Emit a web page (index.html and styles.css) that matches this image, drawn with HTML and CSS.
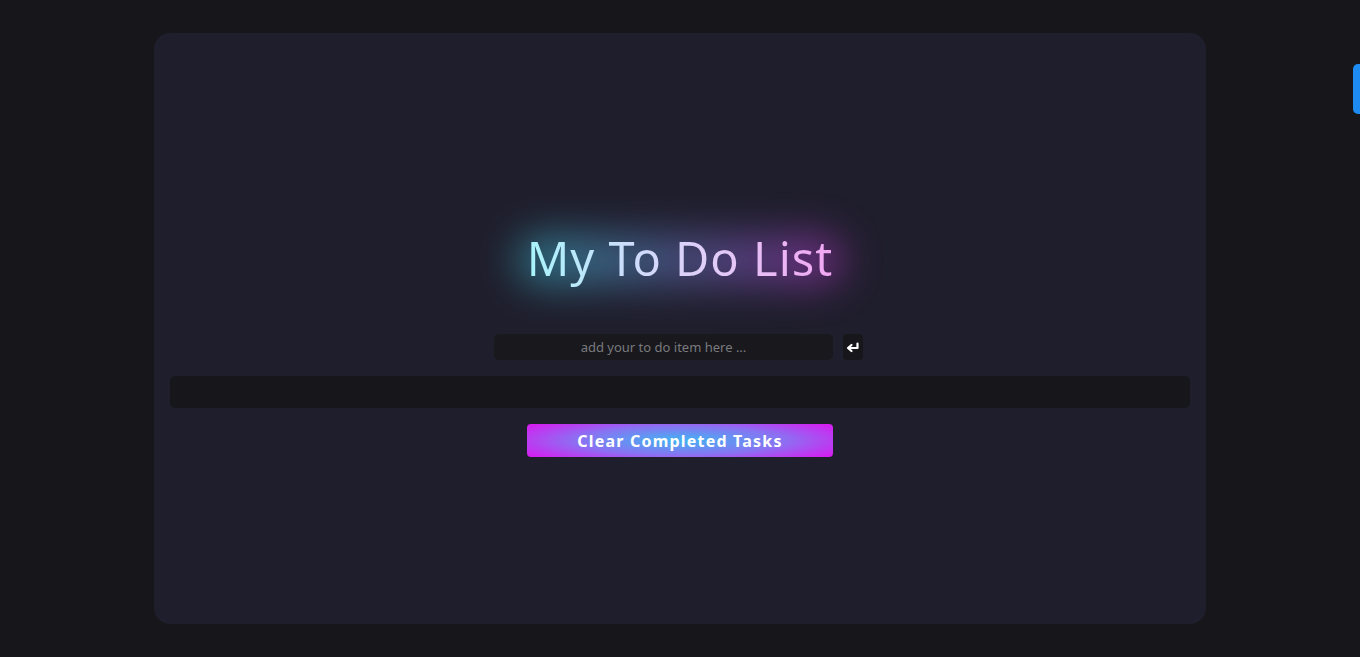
FILE: index.html
```html
<!DOCTYPE html>
<html lang="en">
<head>
<meta charset="utf-8">
<title>My To Do List</title>
<link rel="stylesheet" href="styles.css">
</head>
<body>
<main class="card">
  <h1 class="title" data-text="My To Do List"><span class="title-text">My To Do List</span></h1>
  <form class="add-row">
    <input class="add-input" type="text" placeholder="add your to do item here ...">
    <button class="enter-btn" type="button" aria-label="Add">
      <svg width="14" height="11" viewBox="0 0 14 11"><path d="M11.5 1.5 V6 H2.5 M5.5 3 L2 6 L5.5 9" fill="none" stroke="#fff" stroke-width="2.2" stroke-linecap="round" stroke-linejoin="round"/></svg>
    </button>
  </form>
  <ul class="list"></ul>
  <button class="clear-btn" type="button">Clear Completed Tasks</button>
</main>
<div class="side-tab"></div>
</body>
</html>
```
FILE: styles.css
```css
* { box-sizing: border-box; }
html, body { height: 100%; }
body {
  margin: 0;
  padding: 33px 0;
  background: #17171b;
  font-family: "Noto Sans", "Open Sans", sans-serif;
  overflow: hidden;
}
.card {
  width: 1052px;
  height: 591px;
  margin: 0 auto;
  background: #1f1e2c;
  border-radius: 16px;
  padding: 195px 16px 0 16px;
  display: flex;
  flex-direction: column;
  align-items: center;
}
.title {
  position: relative;
  margin: 0;
  font-weight: 400;
  font-size: 47px;
  line-height: 60px;
  letter-spacing: 1px;
}
.title::before {
  content: "";
  position: absolute;
  left: -10px;
  right: -10px;
  top: 8px;
  bottom: 4px;
  border-radius: 40px;
  background: linear-gradient(90deg, #2f8e9e 0%, #4c5c8e 45%, #6a3c8e 80%, #8a2e98 100%);
  filter: blur(20px);
  opacity: 0.85;
}
.title-text {
  position: relative;
  background: linear-gradient(90deg, #a8f4fb 0%, #cfdcfb 35%, #e1cdf8 60%, #f2a6f2 100%);
  -webkit-background-clip: text;
  background-clip: text;
  color: transparent;
}
.add-row {
  display: flex;
  gap: 10px;
  margin: 46px 0 16px 0;
  padding-right: 3px;
}
.add-input {
  width: 339px;
  height: 26px;
  border: none;
  outline: none;
  border-radius: 5px;
  background: #18181d;
  color: #ddd;
  text-align: center;
  font-family: inherit;
  font-size: 13px;
}
.add-input::placeholder { color: #7a7a7e; }
.enter-btn {
  width: 20px;
  height: 26px;
  border: none;
  border-radius: 4px;
  background: #17171b;
  padding: 0;
  display: flex;
  align-items: center;
  justify-content: center;
}
.list {
  align-self: stretch;
  height: 32px;
  margin: 0;
  padding: 0;
  list-style: none;
  background: #17171b;
  border-radius: 5px;
}
.clear-btn {
  margin-top: 16px;
  width: 306px;
  height: 33px;
  border: none;
  border-radius: 4px;
  background: radial-gradient(ellipse 60% 80% at 50% 50%, #3fb4f2 0%, #8a72f2 55%, #d51ef0 100%);
  color: #fff;
  font-family: inherit;
  font-weight: 700;
  font-size: 16px;
  letter-spacing: 1.2px;
  padding: 0;
}
.side-tab {
  position: absolute;
  right: 0;
  top: 64px;
  width: 7px;
  height: 50px;
  background: #1d8bf1;
  border-radius: 5px 0 0 5px;
}
```
